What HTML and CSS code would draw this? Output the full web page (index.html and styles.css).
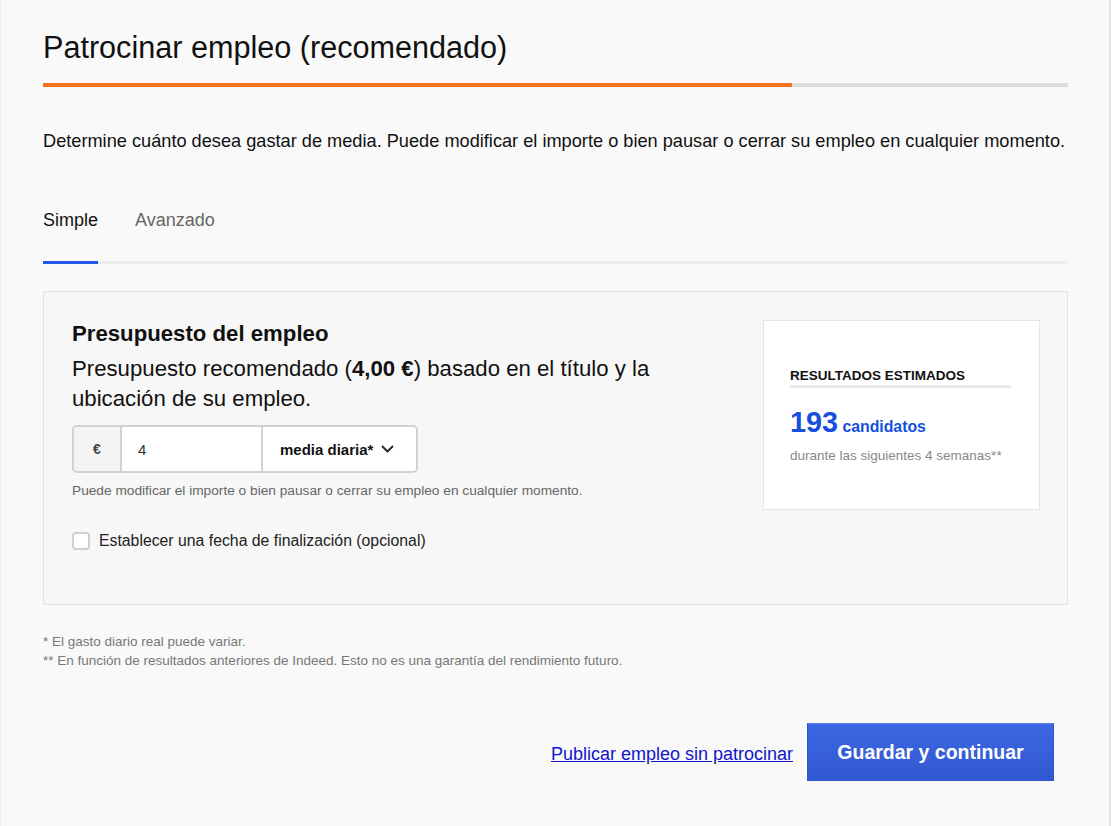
FILE: index.html
```html
<html>
	<head>
		<meta charset="utf-8" />
		<meta name="viewport" content="width=device-width, initial-scale=1">
		<title>Patrocinar empleo</title>
		<link rel="stylesheet" href="styles.css">
	</head>
	<body>
		<div class="page">
			<h1 class="title">Patrocinar empleo (recomendado)</h1>
			<div class="progress"><div class="bar" style="width: 73.1%"></div></div>
			<p class="intro">Determine cuánto desea gastar de media. Puede modificar el importe o bien pausar o cerrar su empleo en cualquier momento.</p>
			<div class="tabs">
				<a class="tab active" href="#">Simple</a>
				<a class="tab" href="#">Avanzado</a>
			</div>
			<div class="card">
				<div class="budget">
					<h2>Presupuesto del empleo</h2>
					<p class="lead">Presupuesto recomendado (<b>4,00 €</b>) basado en el título y la ubicación de su empleo.</p>
					<div class="amount">
						<span class="currency">€</span>
						<span class="value">4</span>
						<span class="period">media diaria*
							<svg width="13" height="8" viewBox="0 0 13 8"><path d="M1.5 1.5l5 5 5-5" fill="none" stroke="#222" stroke-width="1.8" stroke-linecap="round" stroke-linejoin="round"/></svg>
						</span>
					</div>
					<div class="hint">Puede modificar el importe o bien pausar o cerrar su empleo en cualquier momento.</div>
					<label class="check"><span class="box"></span>Establecer una fecha de finalización (opcional)</label>
				</div>
				<div class="results">
					<div class="results-head">RESULTADOS ESTIMADOS</div>
					<div class="count"><span class="num">193</span> candidatos</div>
					<div class="period-note">durante las siguientes 4 semanas**</div>
				</div>
			</div>
			<div class="notes">
				* El gasto diario real puede variar.<br>
				** En función de resultados anteriores de Indeed. Esto no es una garantía del rendimiento futuro.
			</div>
			<div class="actions">
				<a class="skip" href="#">Publicar empleo sin patrocinar</a>
				<a class="primary" href="#">Guardar y continuar</a>
			</div>
		</div>
	</body>
</html>
```

FILE: styles.css
```css
body {
	margin: 0;
	background: #f9f9f9;
	font-family: "Liberation Sans", Arial, sans-serif;
	color: #111;
}

.page {
	min-height: 100vh;
	box-sizing: border-box;
	padding: 0 41px 0 42px;
	border-left: 1px solid #ececec;
	border-right: 2px solid #e4e4e4;
}

.title {
	margin: 0;
	padding-top: 29px;
	font-size: 30.6px;
	line-height: 36px;
	font-weight: normal;
}

.progress {
	margin-top: 18px;
	height: 4px;
	background: #dcdcdc;
}

.progress .bar {
	height: 100%;
	background: #f4731f;
}

.intro {
	margin: 42px 0 0;
	font-size: 18.2px;
	line-height: 24px;
}

.tabs {
	display: flex;
	gap: 37px;
	margin-top: 55px;
	border-bottom: 3px solid #ededed;
}

.tab {
	font-size: 18px;
	line-height: 24px;
	padding-bottom: 29px;
	color: #666;
	text-decoration: none;
	margin-bottom: -3px;
	border-bottom: 3px solid transparent;
}

.tab.active {
	color: #111;
	border-bottom-color: #2457e8;
}

.card {
	display: flex;
	justify-content: space-between;
	align-items: flex-start;
	margin-top: 27px;
	padding: 29px 27px 51px 28px;
	background: #f7f7f7;
	border: 1px solid #e3e3e3;
}

.card .results {
	margin-top: -1px;
}

.budget {
	width: 620px;
}

.budget h2 {
	margin: 0;
	font-size: 22.2px;
	line-height: 26px;
}

.lead {
	margin: 7px 0 0;
	font-size: 22.2px;
	line-height: 30px;
}

.amount {
	display: inline-flex;
	margin-top: 11px;
	height: 44px;
	border: 2px solid #d2d2d2;
	border-radius: 5px;
	background: #fff;
	overflow: hidden;
	font-size: 15px;
	color: #333;
}

.amount span {
	display: flex;
	align-items: center;
}

.currency {
	width: 46px;
	justify-content: center;
	background: #f4f4f4;
	border-right: 2px solid #d2d2d2;
	font-weight: bold;
	font-size: 14px;
	color: #444;
}

.value {
	width: 123px;
	padding-left: 16px;
	border-right: 2px solid #d2d2d2;
}

.period {
	width: 136px;
	padding-left: 17px;
	gap: 8px;
	font-weight: bold;
	color: #111;
}

.hint {
	margin-top: 9px;
	font-size: 13.7px;
	line-height: 18px;
	color: #666;
}

.check {
	display: flex;
	align-items: center;
	gap: 9px;
	margin-top: 29px;
	font-size: 15.8px;
	line-height: 24px;
	color: #222;
}

.check .box {
	width: 14px;
	height: 14px;
	border: 2px solid #cfcfcf;
	border-radius: 4px;
	background: #fff;
}

.results {
	width: 221px;
	padding: 47px 28px 44px 26px;
	background: #fff;
	border: 1px solid #e6e6e6;
}

.results-head {
	font-size: 13.5px;
	font-weight: bold;
	line-height: 15px;
	padding-bottom: 2px;
	border-bottom: 3px solid #e8e8e8;
}

.count {
	margin-top: 17px;
	color: #1550dc;
	font-weight: bold;
	font-size: 15.8px;
	line-height: 34px;
}

.count .num {
	font-size: 28.8px;
}

.period-note {
	margin-top: 3px;
	font-size: 13.5px;
	line-height: 18px;
	color: #888;
}

.notes {
	margin-top: 27px;
	font-size: 13.5px;
	line-height: 19px;
	color: #777;
}

.actions {
	display: flex;
	justify-content: flex-end;
	align-items: center;
	gap: 14px;
	margin-top: 53px;
	padding-right: 14px;
}

.skip {
	padding-top: 4px;
	font-size: 18px;
	color: #1414c8;
}

.primary {
	display: flex;
	align-items: center;
	justify-content: center;
	width: 245px;
	height: 56px;
	background: linear-gradient(#3d67e4, #3058d0);
	border: 1px solid #2e56cc;
	border-top-color: #5b80ea;
	color: #fff;
	font-size: 19.5px;
	font-weight: bold;
	text-decoration: none;
}
```
